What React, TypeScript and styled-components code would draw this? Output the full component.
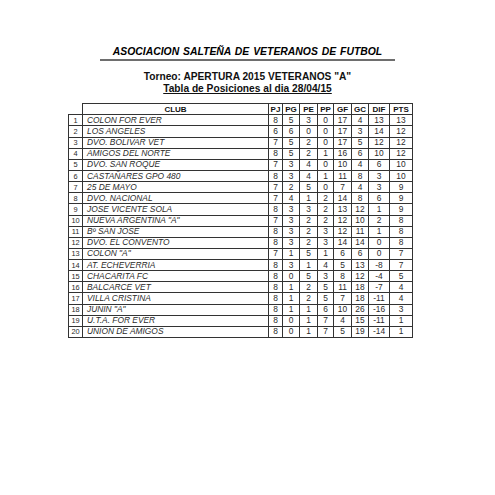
import React from 'react';
import styled, { createGlobalStyle } from 'styled-components';

const GlobalStyle = createGlobalStyle`
    html, body {
        margin: 0;
        padding: 0;
        background: #ffffff;
    }
    body {
        font-family: 'Liberation Sans', Arial, sans-serif;
        color: #1a1a1a;
    }
`;

type Row = [number, string, number, number, number, number, number, number, number, number];

const ROWS: Row[] = [
    [1, 'COLON FOR EVER', 8, 5, 3, 0, 17, 4, 13, 13],
    [2, 'LOS ANGELES', 6, 6, 0, 0, 17, 3, 14, 12],
    [3, 'DVO. BOLIVAR VET', 7, 5, 2, 0, 17, 5, 12, 12],
    [4, 'AMIGOS DEL NORTE', 8, 5, 2, 1, 16, 6, 10, 12],
    [5, 'DVO. SAN ROQUE', 7, 3, 4, 0, 10, 4, 6, 10],
    [6, 'CASTAÑARES GPO 480', 8, 3, 4, 1, 11, 8, 3, 10],
    [7, '25 DE MAYO', 7, 2, 5, 0, 7, 4, 3, 9],
    [8, 'DVO. NACIONAL', 7, 4, 1, 2, 14, 8, 6, 9],
    [9, 'JOSE VICENTE SOLA', 8, 3, 3, 2, 13, 12, 1, 9],
    [10, 'NUEVA ARGENTINA "A"', 7, 3, 2, 2, 12, 10, 2, 8],
    [11, 'Bº SAN JOSE', 8, 3, 2, 3, 12, 11, 1, 8],
    [12, 'DVO. EL CONVENTO', 8, 3, 2, 3, 14, 14, 0, 8],
    [13, 'COLON "A"', 7, 1, 5, 1, 6, 6, 0, 7],
    [14, 'AT. ECHEVERRIA', 8, 3, 1, 4, 5, 13, -8, 7],
    [15, 'CHACARITA FC', 8, 0, 5, 3, 8, 12, -4, 5],
    [16, 'BALCARCE VET', 8, 1, 2, 5, 11, 18, -7, 4],
    [17, 'VILLA CRISTINA', 8, 1, 2, 5, 7, 18, -11, 4],
    [18, 'JUNIN "A"', 8, 1, 1, 6, 10, 26, -16, 3],
    [19, 'U.T.A. FOR EVER', 8, 0, 1, 7, 4, 15, -11, 1],
    [20, 'UNION DE AMIGOS', 8, 0, 1, 7, 5, 19, -14, 1],
];

const STAT_COLS = [
    { key: 'PJ', width: 14 },
    { key: 'PG', width: 17 },
    { key: 'PE', width: 18 },
    { key: 'PP', width: 16 },
    { key: 'GF', width: 18 },
    { key: 'GC', width: 17 },
    { key: 'DIF', width: 21 },
    { key: 'PTS', width: 23 },
];

const Page = styled.div`
    width: 495px;
    height: 495px;
    padding-top: 46px;
    box-sizing: border-box;
`;

const Heading = styled.h1`
    width: 295px;
    margin: 0 auto;
    padding-bottom: 1px;
    border-bottom: 2px solid #6e6e6e;
    font-size: 10.4px;
    line-height: 12px;
    font-weight: bold;
    font-style: italic;
    text-align: center;
    word-spacing: 1px;
    color: #000;
`;

const SubHeading = styled.div<{ $underline?: boolean }>`
    margin: 0;
    font-size: 10.2px;
    line-height: 12.3px;
    font-weight: bold;
    text-align: center;
    color: #111;
    text-decoration: ${p => (p.$underline ? 'underline' : 'none')};
`;

const Titles = styled.div`
    margin-top: 9.5px;
`;

const Table = styled.table`
    margin: 8px 0 0 68px;
    border-collapse: collapse;
    table-layout: fixed;
    width: 344px;
`;

const Tr = styled.tr`
    height: 11.15px;
`;

const Cell = styled.td<{ $italic?: boolean; $align?: 'left' | 'center' }>`
    border: 1px solid #333;
    padding: 0;
    font-size: 8.4px;
    line-height: 9px;
    font-style: ${p => (p.$italic ? 'italic' : 'normal')};
    text-align: ${p => p.$align ?? 'center'};
    white-space: nowrap;
    overflow: hidden;
    color: #2a2a2a;
`;

const HeadCell = styled.th`
    border: 1px solid #333;
    padding: 0;
    font-size: 8px;
    line-height: 9px;
    font-weight: bold;
    text-align: center;
    color: #111;
`;

const Corner = styled.th`
    border: none;
    padding: 0;
`;

const PosCell = styled.td`
    border: 1px solid #333;
    padding: 0;
    font-size: 7.4px;
    line-height: 9px;
    text-align: center;
    color: #2a2a2a;
`;

const ClubCell = styled(Cell)`
    padding-left: 4px;
`;

export default function App() {
    return (
        <>
            <GlobalStyle />
            <Page>
                <Heading>ASOCIACION SALTEÑA DE VETERANOS DE FUTBOL</Heading>
                <Titles>
                    <SubHeading>Torneo: APERTURA 2015 VETERANOS "A"</SubHeading>
                    <SubHeading $underline>Tabla de Posiciones al dia 28/04/15</SubHeading>
                </Titles>
                <Table>
                    <colgroup>
                        <col style={{ width: 14 }} />
                        <col style={{ width: 186 }} />
                        {STAT_COLS.map(c => (
                            <col key={c.key} style={{ width: c.width }} />
                        ))}
                    </colgroup>
                    <thead>
                        <Tr>
                            <Corner />
                            <HeadCell>CLUB</HeadCell>
                            {STAT_COLS.map(c => (
                                <HeadCell key={c.key}>{c.key}</HeadCell>
                            ))}
                        </Tr>
                    </thead>
                    <tbody>
                        {ROWS.map(([pos, club, ...stats]) => (
                            <Tr key={pos}>
                                <PosCell>{pos}</PosCell>
                                <ClubCell $italic $align="left">
                                    {club}
                                </ClubCell>
                                {stats.map((v, i) => (
                                    <Cell key={STAT_COLS[i].key}>{v}</Cell>
                                ))}
                            </Tr>
                        ))}
                    </tbody>
                </Table>
            </Page>
        </>
    );
}
